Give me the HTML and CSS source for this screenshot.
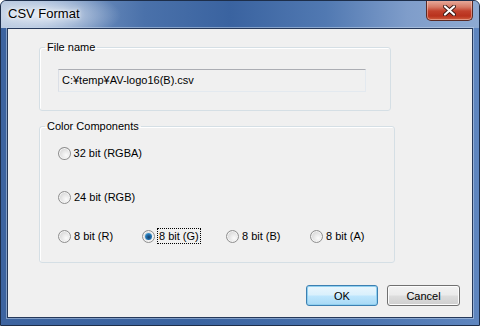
FILE: index.html
```html
<!DOCTYPE html>
<html lang="en">
<head>
    <meta charset="UTF-8">
    <meta name="viewport" content="width=device-width, initial-scale=1.0">
    <title>CSV Format</title>
    <link rel="stylesheet" href="styles.css">
</head>
<body>
    <!-- Dialog window -->
    <div class="window">
        <div class="titlebar">
            <span class="title">CSV Format</span>
            <button class="close-btn" aria-label="Close">
                <svg width="13" height="11" viewBox="0 0 13 11">
                    <path d="M2 1.5 L11 9.5 M11 1.5 L2 9.5" stroke="#3a1a16" stroke-width="4" stroke-linecap="round"/>
                    <path d="M2 1.5 L11 9.5 M11 1.5 L2 9.5" stroke="#ffffff" stroke-width="2.2" stroke-linecap="round"/>
                </svg>
            </button>
        </div>

        <div class="client">
            <fieldset class="group group-file">
                <legend>File name</legend>
                <div class="textbox">C:¥temp¥AV-logo16(B).csv</div>
            </fieldset>

            <fieldset class="group group-color">
                <legend>Color Components</legend>
                <div class="radio-row row-1">
                    <label class="radio"><span class="dot"></span><span class="text">32 bit (RGBA)</span></label>
                </div>
                <div class="radio-row row-2">
                    <label class="radio"><span class="dot"></span><span class="text">24 bit (RGB)</span></label>
                </div>
                <div class="radio-row row-3">
                    <label class="radio"><span class="dot"></span><span class="text">8 bit (R)</span></label>
                    <label class="radio"><span class="dot checked"></span><span class="text focus">8 bit (G)</span></label>
                    <label class="radio"><span class="dot"></span><span class="text">8 bit (B)</span></label>
                    <label class="radio"><span class="dot"></span><span class="text">8 bit (A)</span></label>
                </div>
            </fieldset>

            <div class="buttons">
                <button class="btn btn-default">OK</button>
                <button class="btn">Cancel</button>
            </div>
        </div>
    </div>
</body>
</html>
```

FILE: styles.css
```css
body {
    margin: 0;
    background: #ffffff;
    font-family: "Liberation Sans", Arial, sans-serif;
    font-size: 11px;
    color: #000;
}

.window {
    position: relative;
    width: 480px;
    height: 326px;
    box-sizing: border-box;
    border: 1px solid #1d2e4a;
    border-radius: 6px 6px 0 0;
    background: linear-gradient(to right, #3d64a0 0%, #3a63a0 40%, #4a73ae 75%, #5f86bf 100%);
    display: flex;
    flex-direction: column;
    overflow: hidden;
}

.titlebar {
    height: 27px;
    flex: none;
    background:
        radial-gradient(ellipse 80px 26px at 40px 14px, rgba(232, 238, 246, 0.95), rgba(232, 238, 246, 0) 100%),
        linear-gradient(to right, #a9bdd8 0%, #7d9bc6 12%, #4a71aa 30%, #3a63a0 48%, #5179b2 68%, #7f9dca 85%, #8eaad2 100%);
}

.title {
    display: block;
    padding: 5px 0 0 7px;
    font-size: 13px;
    line-height: 16px;
    color: #000;
    text-shadow: 0 0 6px #ffffff, 0 0 3px #ffffff;
}

.close-btn {
    position: absolute;
    top: -1px;
    right: 6px;
    width: 47px;
    height: 21px;
    padding: 0;
    border: 1px solid #5a2a24;
    border-top: none;
    border-radius: 0 0 5px 5px;
    background: linear-gradient(to bottom, #e9b0a2 0%, #d67a66 35%, #c2412c 55%, #b9321d 80%, #d0603f 100%);
    box-shadow: inset 0 0 0 1px rgba(255, 220, 210, 0.45);
    display: flex;
    align-items: center;
    justify-content: center;
}

.client {
    flex: none;
    height: 290px;
    margin: 0 6px;
    box-sizing: border-box;
    border: 1px solid #26395a;
    background: #f0f0f0;
    padding: 11px 0 0 31px;
    box-shadow: 0 0 0 1px rgba(200, 215, 235, 0.5);
}

.group {
    width: 352px;
    box-sizing: border-box;
    margin: 0;
    padding: 0;
    border: 1px solid #d5dfe5;
    border-radius: 3px;
    box-shadow: inset 1px 1px 0 #ffffff;
}

.group legend {
    margin-left: 5px;
    padding: 0 2px;
    line-height: 14px;
}

.group-file {
    height: 71px;
}

.group-color {
    margin-top: 8px;
    height: 144px;
}

.textbox {
    margin: 15px 0 0 18px;
    width: 308px;
    height: 23px;
    box-sizing: border-box;
    border: 1px solid #e3e9ef;
    border-top-color: #abadb3;
    border-left-color: #dbdfe6;
    padding: 0 0 0 3px;
    line-height: 21px;
    background: #f0f0f0;
}

.radio-row {
    display: grid;
    grid-template-columns: repeat(4, 84px);
    padding-left: 18px;
    height: 20px;
    align-items: center;
}

.row-1 {
    margin-top: 10px;
}

.row-2 {
    margin-top: 24px;
}

.row-3 {
    margin-top: 19px;
}

.radio {
    display: flex;
    align-items: center;
    gap: 3px;
    white-space: nowrap;
}

.dot {
    width: 13px;
    height: 13px;
    box-sizing: border-box;
    border-radius: 50%;
    border: 1px solid #8f8f8f;
    background: radial-gradient(circle at 65% 65%, #fbfbfb 0%, #e6e6e6 45%, #c9c9c9 100%);
    box-shadow: inset 0 0 0 1px #f4f4f4;
    position: relative;
}

.dot.checked::after {
    content: "";
    position: absolute;
    left: 2px;
    top: 2px;
    width: 7px;
    height: 7px;
    border-radius: 50%;
    background: radial-gradient(circle at 55% 60%, #1a3f66 0%, #1f6fae 45%, #6ec3ee 100%);
}

.text.focus {
    outline: 1px dotted #000;
    outline-offset: 0;
    padding: 0 1px;
    line-height: 14px;
}

.buttons {
    display: flex;
    justify-content: flex-end;
    gap: 9px;
    margin-top: 22px;
    padding-right: 12px;
}

.btn {
    width: 73px;
    height: 21px;
    padding: 0;
    font-family: "Liberation Sans", Arial, sans-serif;
    font-size: 11px;
    color: #000;
    border: 1px solid #707070;
    border-radius: 3px;
    background: linear-gradient(to bottom, #f2f2f2 0%, #ebebeb 48%, #dddddd 52%, #cfcfcf 100%);
    box-shadow: inset 0 0 0 1px #fcfcfc;
}

.btn-default {
    width: 72px;
    border-color: #3c7fb1;
    background: linear-gradient(to bottom, #eaf6fd 0%, #d9f0fc 48%, #bee6fd 52%, #a7d9f5 100%);
    box-shadow: inset 0 0 0 1px #90d0f0;
}
```
